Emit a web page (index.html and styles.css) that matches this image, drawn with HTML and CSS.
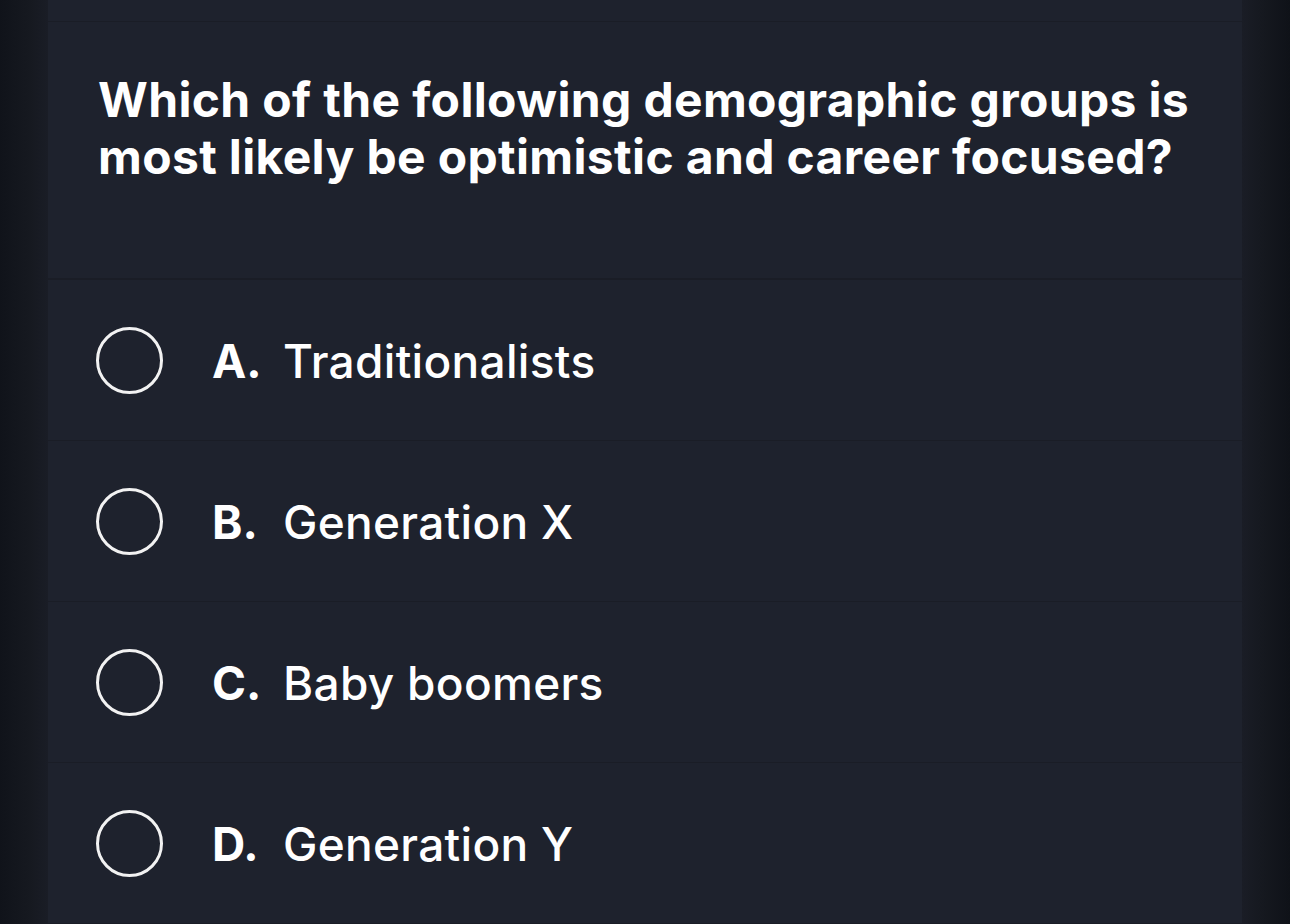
FILE: index.html
```html
<!DOCTYPE html>
<html>
<head>
<meta charset="utf-8">
<link rel="stylesheet" href="styles.css">
</head>
<body>
<div class="page">
  <div class="card">
    <div class="top-strip"></div>
    <div class="question"><p class="question-text">Which of the following demographic groups is most likely be optimistic and career focused?</p></div>
    <div class="option"><span class="radio"></span><span class="letter">A.</span><span class="label">Traditionalists</span></div>
    <div class="option"><span class="radio"></span><span class="letter">B.</span><span class="label">Generation X</span></div>
    <div class="option"><span class="radio"></span><span class="letter">C.</span><span class="label">Baby boomers</span></div>
    <div class="option"><span class="radio"></span><span class="letter">D.</span><span class="label">Generation Y</span></div>
  </div>
</div>
</body>
</html>
```

FILE: styles.css
```css
html, body {
  margin: 0;
  padding: 0;
  height: 100%;
}
body {
  background: #14171e;
  font-family: Inter, "Noto Sans", "Liberation Sans", sans-serif;
  color: #ffffff;
  overflow: hidden;
}
.page {
  height: 924px;
  display: flex;
  justify-content: center;
  background: linear-gradient(to right, #10131a 0px, #161920 30px, #1a1d26 48px, #1a1d26 1242px, #161920 1260px, #0f1218 1290px);
}
.card {
  width: 1194px;
  background: #1e222d;
  display: flex;
  flex-direction: column;
}
.top-strip {
  height: 21px;
  border-bottom: 1px solid #1a1d26;
}
.question {
  height: 259px;
  box-sizing: border-box;
  padding: 49px 0 0 50px;
  border-bottom: 2px solid #1a1d26;
}
.question-text {
  margin: 0;
  max-width: 1110px;
  font-size: 48px;
  font-weight: 700;
  line-height: 57px;
  letter-spacing: 0.35px;
}
.option {
  height: 162px;
  box-sizing: border-box;
  display: flex;
  align-items: center;
  padding-left: 48px;
  padding-top: 2px;
  border-bottom: 1px solid #1a1d26;
}
.radio {
  width: 67px;
  height: 67px;
  box-sizing: border-box;
  border: 3px solid #f2f2f2;
  border-radius: 50%;
  flex: none;
  margin-right: 49px;
}
.letter {
  font-size: 46px;
  font-weight: 700;
  width: 71px;
  flex: none;
}
.label {
  font-size: 46px;
  font-weight: 500;
  letter-spacing: 0.3px;
}
```
